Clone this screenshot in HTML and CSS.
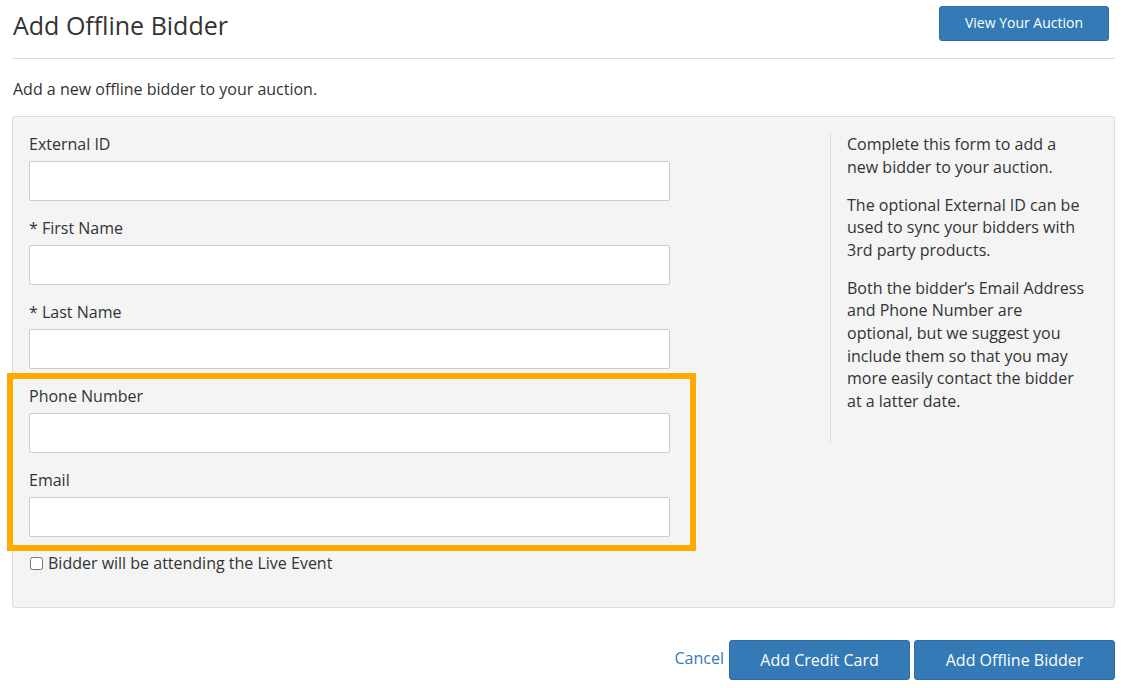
FILE: index.html
```html
<!DOCTYPE html>
<html lang="en">
<head>
    <meta charset="UTF-8">
    <title>Add Offline Bidder</title>
    <link rel="stylesheet" href="styles.css">
</head>
<body>
    <div class="page">
        <div class="page-header">
            <h1>Add Offline Bidder</h1>
            <a class="btn btn-small" href="#">View Your Auction</a>
        </div>

        <p class="lead">Add a new offline bidder to your auction.</p>

        <form class="panel">
            <div class="panel-body">
                <div class="fields">
                    <div class="field">
                        <label>External ID</label>
                        <input type="text">
                    </div>
                    <div class="field">
                        <label>* First Name</label>
                        <input type="text">
                    </div>
                    <div class="field">
                        <label>* Last Name</label>
                        <input type="text">
                    </div>
                    <div class="highlight">
                        <div class="field">
                            <label>Phone Number</label>
                            <input type="text">
                        </div>
                        <div class="field">
                            <label>Email</label>
                            <input type="text">
                        </div>
                    </div>
                    <label class="check">
                        <input type="checkbox">
                        Bidder will be attending the Live Event
                    </label>
                </div>

                <div class="help">
                    <p>Complete this form to add a new bidder to your auction.</p>
                    <p>The optional External ID can be used to sync your bidders with 3rd party products.</p>
                    <p>Both the bidder’s Email Address and Phone Number are optional, but we suggest you include them so that you may more easily contact the bidder at a latter date.</p>
                </div>
            </div>
        </form>

        <div class="actions">
            <a class="cancel" href="#">Cancel</a>
            <button class="btn btn-card" type="button">Add Credit Card</button>
            <button class="btn btn-wide" type="button">Add Offline Bidder</button>
        </div>
    </div>
</body>
</html>
```

FILE: styles.css
```css
* {
    margin: 0;
    padding: 0;
    box-sizing: border-box;
}

body {
    font-family: 'Open Sans', 'Liberation Sans', sans-serif;
    font-size: 16px;
    color: #333;
    background-color: white;
}

.page {
    width: 1103px;
    margin-left: 12px;
}

.page-header {
    display: flex;
    justify-content: space-between;
    align-items: flex-start;
    height: 59px;
    border-bottom: 1px solid #ddd;
}

.page-header h1 {
    font-size: 25px;
    font-weight: 400;
    line-height: 34px;
    margin-top: 8px;
    margin-left: 1px;
    color: #333;
}

.btn {
    display: inline-flex;
    align-items: center;
    justify-content: center;
    height: 40px;
    padding: 0;
    background-color: #337ab7;
    border: 1px solid #2e6da4;
    border-radius: 3px;
    color: white;
    font-family: inherit;
    font-size: 16px;
    white-space: nowrap;
    text-decoration: none;
    cursor: pointer;
}

.btn-small {
    width: 170px;
    height: 35px;
    margin-top: 6px;
    margin-right: 6px;
    padding-bottom: 2px;
    font-size: 14px;
}

.btn-card {
    width: 181px;
}

.btn-wide {
    width: 201px;
}

.lead {
    margin: 19px 0 0 1px;
    line-height: 22px;
}

.panel {
    margin-top: 16px;
    background-color: #f4f4f4;
    border: 1px solid #ddd;
    border-radius: 3px;
}

.panel-body {
    display: flex;
    padding: 16px 16px 33px 16px;
}

.fields {
    width: 641px;
}

.field {
    margin-bottom: 16px;
}

.field label {
    display: block;
    line-height: 22px;
    margin-bottom: 6px;
}

.field input {
    display: block;
    width: 100%;
    height: 40px;
    border: 1px solid #ccc;
    border-radius: 2px;
    background-color: white;
    padding: 0 10px;
    font-family: inherit;
    font-size: 16px;
}

.highlight {
    position: relative;
}

.highlight::after {
    content: "";
    position: absolute;
    top: -12px;
    left: -22px;
    right: -26px;
    bottom: -14px;
    border: 6px solid #ffaa00;
    pointer-events: none;
}

.highlight .field:last-child {
    margin-bottom: 15px;
}

.check {
    display: flex;
    align-items: center;
    gap: 5px;
    line-height: 22px;
    padding-left: 1px;
}

.check input {
    width: 13px;
    height: 13px;
    margin: 0;
}

.help {
    width: 254px;
    margin-left: 160px;
    height: 310px;
    border-left: 1px solid #ddd;
    padding-left: 16px;
}

.help p {
    line-height: 22.6px;
    margin-bottom: 15.4px;
    width: 237px;
}

.actions {
    display: flex;
    justify-content: flex-end;
    align-items: center;
    gap: 4px;
    margin-top: 32px;
}

.cancel {
    color: #337ab7;
    text-decoration: none;
    margin-right: 1px;
    margin-top: -4px;
}
```
